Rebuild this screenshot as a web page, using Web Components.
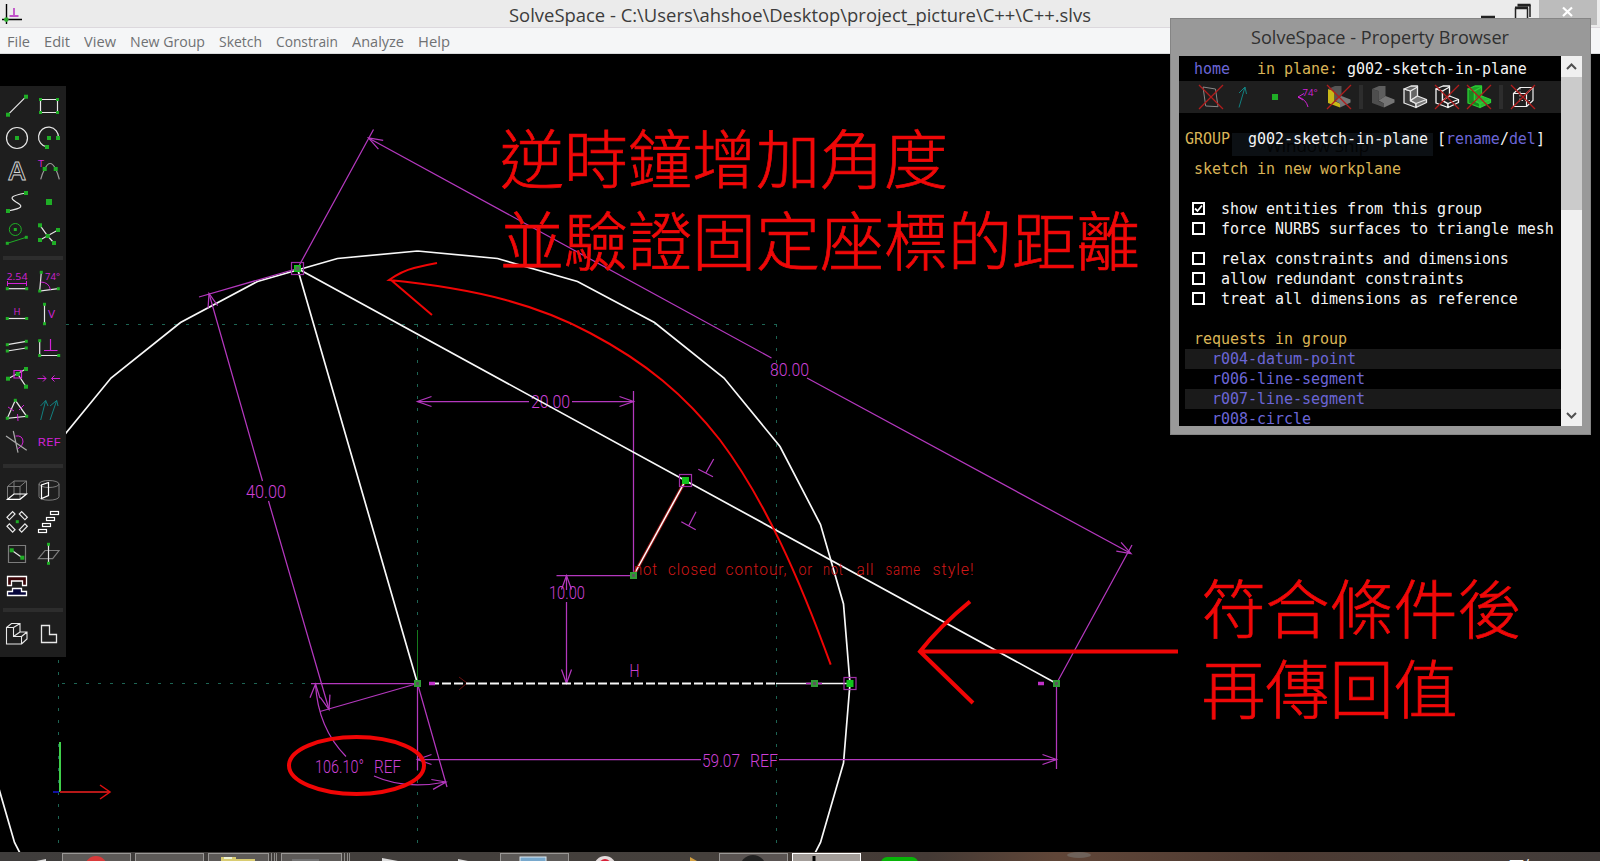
<!DOCTYPE html>
<html lang="zh-Hant">
<head>
<meta charset="utf-8">
<title>SolveSpace</title>
<style>
html,body{margin:0;height:100%;background:#000;overflow:hidden}
</style>
</head>
<body>
<solve-space></solve-space>
<script>
const def=(name,html,init)=>customElements.define(name,class extends HTMLElement{
  connectedCallback(){
    if(this.shadowRoot)return;
    const r=this.attachShadow({mode:'open'});
    const t=document.createElement('template');
    t.innerHTML=html;
    r.append(t.content.cloneNode(true));
    if(init)init.call(this,r);
  }
});

/* A run of text squeezed or stretched to a given width */
def('fit-text',`<style>:host{display:block;white-space:pre}span{display:inline-block;transform-origin:0 50%}</style><span><slot></slot></span>`,
function(r){
  const w=+this.getAttribute('w'),s=r.querySelector('span');
  this.style.width=w+'px';
  s.style.transform='scaleX('+(w/s.getBoundingClientRect().width)+')';
});

/* ---------- title bar ---------- */
def('title-bar',`<style>
:host{display:flex;height:28px;background:#ebebeb;border-bottom:1px solid #dcd8dd;box-sizing:border-box;font:18px/30px "Open Sans",sans-serif;color:#3c3c3c;justify-content:space-between}
.logo{width:509px;flex:none}
.ctl{width:125px;flex:none;margin-left:auto}
svg{display:block}
</style>
<div class="logo"><svg width="30" height="27"><path d="M6.500 4v20M2 19.500h20" stroke="#000" stroke-width="1.400"/><path d="M14 8v8M9.500 16h9" stroke="#c050c8" stroke-width="1.800"/><circle cx="6.300" cy="19.600" r="2.300" fill="#2fae2f"/></svg></div>
<fit-text w="582">SolveSpace - C:\\Users\\ahshoe\\Desktop\\project_picture\\C++\\C++.slvs</fit-text>
<div class="ctl"><svg width="125" height="27"><path d="M6 17h14" stroke="#222" stroke-width="2.500"/><path d="M40.500 20V8.500h12V20M43 5.500h12V17" fill="none" stroke="#222" stroke-width="1.500"/><path d="M40 7.800h13M42.500 5h13" stroke="#222" stroke-width="2.500"/><rect x="64" width="58" height="25" fill="#bcbcbc"/><path d="M88 7.500l9 8.500M97 7.500l-9 8.500" stroke="#fff" stroke-width="2.200"/></svg></div>`);

/* ---------- menu bar ---------- */
def('menu-bar',`<style>
:host{display:flex;gap:14px;padding-left:7px;height:26px;box-sizing:border-box;background:#f5f6f7;border-bottom:1px solid #d8dadc;font:14.500px/27px "Open Sans",sans-serif;color:#6f7173}
</style>
<fit-text w="23">File</fit-text><fit-text w="26">Edit</fit-text><fit-text w="32">View</fit-text><fit-text w="75">New Group</fit-text><fit-text w="43">Sketch</fit-text><fit-text w="62">Constrain</fit-text><fit-text w="52">Analyze</fit-text><fit-text w="32">Help</fit-text>`);

/* ---------- left tool palette ---------- */
const d=(x,y,s=4)=>`<rect x="${x-s/2}" y="${y-s/2}" width="${s}" height="${s}" fill="#1fae26"/>`;
const w=(p,c='#e8e8e8',k=1.2,f='none')=>`<path d="${p}" stroke="${c}" stroke-width="${k}" fill="${f}"/>`;
const M='#d222d6',G='#1fae26',Y='#7c7c7c',T='#128080';
const tx=(s,x,y,len,c=M,z=9.5)=>`<text x="${x}" y="${y}" textLength="${len}" lengthAdjust="spacingAndGlyphs" fill="${c}" font-size="${z}">${s}</text>`;
const bar=(x,y,a)=>`<rect x="-4" y="-1.700" width="8" height="3.400" transform="translate(${x} ${y}) rotate(${a})" fill="none" stroke="#e8e8e8" stroke-width="1.200"/>`;
const step=(x,y)=>`<rect x="${x}" y="${y}" width="8" height="3" fill="none" stroke="#fff" stroke-width="1.200"/>`;
const palette=[[
 w('M7 24.700L25 6.700')+d(7,24.7)+d(25,6.7),
 w('M7.500 9.500H24.500V22.500H7.500Z')+d(7.5,9.5,3)+d(24.5,9.5,3)+d(7.5,22.5,3)+d(24.5,22.5,3),
 '<circle cx="16" cy="16" r="10.500" fill="none" stroke="#e8e8e8" stroke-width="1.200"/>'+d(16,16),
 w('M25.500 16A10 10 0 1 0 14 25')+d(16,16)+d(25,16)+d(14,25),
 '<text x="7.500" y="26" font-size="26" font-weight="600" textLength="17" lengthAdjust="spacingAndGlyphs" fill="#1e1e1e" stroke="#d4d4d4" stroke-width=".9">A</text>',
 tx('T',5,13,6)+w('M7.700 25.300Q9 20 11.700 15Q17 4 22.700 15Q25 20 26.300 25.300','#999')+d(11.7,15)+d(22.7,15),
 w('M25 7C8 10 9 12 15 16C22 20 23 22 7 25')+d(25,7)+d(7,25),
 d(16,16,6),
 `<circle cx="14.300" cy="11.500" r="6" fill="none" stroke="${G}"/>`+w('M6.300 25.300L25.300 19.300',G,1)+d(14.3,11.5,3)+d(6.3,25.3,3)+d(25.3,19.3,3),
 w('M7 7.300L14.700 18L21 25M7 22L25 12')+d(7,7.3)+d(25,12)+d(7,22)+d(21,25)+d(14.7,18)
],[
 tx('2.54',5.5,13.5,21)+w('M6.500 15v5M25.500 15v5M6.500 17.500H25.500',M,1)+w('M6.300 22.700H25.700')+d(6.3,22.7,3)+d(25.7,22.7,3),
 w('M8.300 6.300L6.700 25L25.300 22.700')+w('M7.500 16Q16 16 17.500 24',M,1)+tx('74°',12,13.5,15)+d(8.3,6.3,3)+d(6.7,25,3)+d(25.3,22.7,3),
 tx('H',12.5,17.3,7)+w('M6.300 20.500H25.700')+d(6.3,20.5,3)+d(25.7,20.5,3),
 w('M11.500 6.300V25.700')+tx('V',15,20,7,M,11)+d(11.5,6.3,3)+d(11.5,25.7,3),
 w('M6.300 14.700L25.300 11.300M6.300 21L25.300 18')+d(6.3,14.7,3)+d(25.3,11.3,3)+d(6.3,21,3)+d(25.3,18,3),
 w('M6.700 10.700V25.500H25.700')+w('M17.500 9V20.500M11 20.500H24.500',M)+d(6.7,10.7,3)+d(6.7,25.5,3)+d(25.7,25.5,3),
 w('M7 16.700L25 7M16.700 12L25 24.700')+d(7,16.7)+d(25,7)+d(25,24.7)+d(16.7,12)+w('M13 8.500h7.500v7.500h-7.500z',M),
 w('M4.500 16.500H13M10 13.500l3 3l-3 3M27 16.500H18.500M21.500 13.500l-3 3l3 3',M,1),
 w('M14.300 6.300L6.300 24.300L25.700 22.300Z')+w('M7 13l6 4M23 11l-5 5M16.500 20l.5 7',M,1)+d(14.3,6.3,3)+d(6.3,24.3,3)+d(25.7,22.3,3),
 w('M7.700 26L12.700 6.500M7.500 12L12.700 6.500L15 12M17 26L23.700 6.500M17 12L23.700 6.500L25 12',T,1),
 w('M14.500 10Q22 9 22 16Q22 20 16.500 23',M,1)+w('M5 10L25.700 24.300M12.300 5L17 26.700','#aaa'),
 tx('REF',4.5,20,23,M,11.5)
],[
 w('M6.500 25V12.500H19V25M6.500 12.500L13 7H25.500V20M19 12.500L25.500 7M13 7V20',Y,1)+w('M6.500 25.300H19L25.500 20H13Z','#fff'),
 `<g fill="none" stroke="${Y}"><ellipse cx="16" cy="10" rx="10" ry="3.500"/><path d="M6 10V22.700M26 10V22.700M6 22.700A10 3.500 0 0 0 26 22.700"/></g>`+w('M8.500 11V24.500L15.500 21.500V8.500Z','#fff'),
 bar(10,9.7,-45)+bar(22.3,9.7,45)+bar(10,22,45)+bar(22.3,22,-45)+d(16.3,15.7,3),
 step(5.5,23.5)+step(9.5,17.5)+step(13.5,11.5)+step(17.5,5.5),
 w('M7.500 7.500h17v17h-17z',Y)+w('M10.700 12.300L21.300 19.700')+d(10.7,12.3)+d(21.3,19.7),
 w('M12 12.500H26L19.700 20.700H5.300Z',Y)+w('M15.500 6.300V25.300')+d(15.5,6.3,3)+d(15.5,25.3,3),
 w('M6.500 6.500H25.500V15.500H21.500V11H10.500V15.500H6.500Z','#fff',1.3,'#3a0508')+w('M6.500 25.500H25.500V21.500H20.500V18.500H11.500V21.500H6.500Z','#fff',1.3,'#05053a'),
 ''
],[
 w('M5.500 9.500H12.500V18.500H20.500V26H5.500ZM5.500 9.500L10.500 5.500H19V14H26V21L20.500 26M12.500 9.500L19 5.500M12.500 18.500L19 14M20.500 18.500L26 14','#e8e8e8',1.1),
 w('M8.500 7.500H16.500V16.500H23.500V24.500H8.500Z','#e8e8e8',1.3)
]];
def('tool-palette',`<style>
:host{display:block;width:66px;height:571px;box-sizing:border-box;padding:4px 1px;background:#1e1e1e}
.g{display:grid;grid-template-columns:32px 32px;grid-auto-rows:32px}
.g+.g{grid-template-rows:16px}
.g+.g::before{content:"";grid-column:1/3;height:4px;margin:6px 2px;background:#2d2d2d}
svg{display:block;width:32px;height:32px;font-family:"Open Sans",sans-serif}
</style>`+palette.map(g=>`<div class="g">${g.map(i=>`<svg viewBox="0 0 32 32">${i}</svg>`).join('')}</div>`).join(''));

/* ---------- sketch drawing ---------- */
const q=[[0,432.5],[80,425],[160,402],[237,361],[306.5,305.5],[362.5,237],[403,159],[426,79.5],[432.5,0]];
const half=[...q.map(([x,y])=>[x,-y]),...q.slice(0,-1).reverse()];
const pts=[...half,...half.slice().reverse().map(([x,y])=>[-x,y])].map(([x,y])=>(417.5+x)+','+(683.5+y)).join(' ');
const arrow=(x,y,deg)=>`<path d="M-14 -5L0 0L-14 5" transform="translate(${x} ${y}) rotate(${deg})"/>`;
const span=(s,x,len)=>`<tspan x="${x}" textLength="${len}" lengthAdjust="spacingAndGlyphs">${s}</tspan>`;
const dim=(s,x,y,len)=>`<text x="${x}" y="${y}" textLength="${len}" lengthAdjust="spacingAndGlyphs">${s}</text>`;
const pt=(x,y)=>`<rect x="${x-3.5}" y="${y-3.5}" width="7" height="7" fill="#2f9a35"/><rect x="${x-1.5}" y="${y-1.5}" width="3" height="3" fill="#5a5a5a"/>`;
const gp=(x,y)=>`<rect x="${x-6}" y="${y-6}" width="12" height="12" fill="none" stroke="#a030a8" stroke-width="1.200"/><rect x="${x-3.5}" y="${y-3.5}" width="7" height="7" fill="#12c41c"/>`;
def('sketch-canvas',`<style>
:host{display:block;width:1600px;height:798px;background:#000}
svg{display:block}
.mag{fill:none;stroke:#b438be;stroke-width:1.250}
.dims{fill:#cc40d6;font:300 18px Roboto,"Open Sans",sans-serif}
.red{fill:none;stroke:#f00505}
.err{fill:#d01818;font:300 16.500px Roboto,sans-serif;letter-spacing:1px}
.note{fill:#f00808;stroke:#f00808;stroke-width:.7;font:300 64px "Noto Sans CJK TC",sans-serif}
</style>
<svg width="1600" height="798" viewBox="0 54 1600 798">
<g stroke="#1d6453" stroke-dasharray="3 9" fill="none"><path d="M66 324.500H776.500M62 683.500H417M58.500 324V852M417.500 324V852M776.500 324V852"/></g>
<polyline points="${pts}" fill="none" stroke="#f8f8f8" stroke-width="1.700"/>
<path d="M417.500 683V630" stroke="#157a1c" fill="none"/>
<path d="M459 677l8 6l-8 7" stroke="#6a1010" fill="none"/>
<g class="mag">
<path d="M297.500 268.500L373.500 129.500M368.500 138L771.500 358M807 378L1131 553.500M1056.500 683.500L1132 545"/>
${arrow(368.5,138,28.5+180)}${arrow(1131,553.5,28.5)}
<path d="M417.500 401.500H529M572 401.500H633.500M633.500 391V572"/>
${arrow(417.5,401.5,180)}${arrow(633.5,401.5,0)}
<path d="M297.500 268.500L199 297M209 293.500L262.500 481M268.500 501L329 709.500M417.500 683.500L320 711.500"/>
${arrow(209,293.5,-106)}${arrow(329,709.5,74)}
<path d="M311 683.500H417.500M315.500 684Q318 728 346 756.500M374 776Q405 790 446 782M417.500 683.500L447 787"/>
${arrow(315.5,684,-88)}${arrow(446,782,-10)}
<path d="M417.500 683.500V770M417.500 759.500H701M779 759.500H1056.500M1056.500 683.500V769"/>
${arrow(417.5,759.5,180)}${arrow(1056.5,759.5,0)}
<path d="M556.500 575.500H633M566.500 575.500V590M566.500 602V683.500"/>
${arrow(566.5,575.5,-90)}${arrow(566.5,683.5,90)}
<path d="M698.300 469.300L713 476.700M706 472.700L713.700 459M681.300 521.700L695.700 529.700M689 525.300L696 511.700"/>
</g>
<g class="dims">
${dim('80.00',770,376,39)}${dim('20.00',531,408,39)}${dim('40.00',246,498,40)}${dim('10.00',549,599,36)}<text y="773">${span('106.10°',315,49)} ${span('REF',374,27)}</text><text y="766.500">${span('59.07',702,38)} ${span('REF',750,28)}</text>${dim('H',629.5,677,10)}
</g>
<g fill="none" stroke="#f8f8f8" stroke-width="1.700">
<path d="M417.500 683.500L297.500 268.500L1056.500 683.500"/>
<path d="M430 683.500H776" stroke-width="2" stroke-dasharray="9 3"/><path d="M776 683.500H850"/>
</g>
<path d="M685.500 480.500L633.500 575.500" stroke="#8c1010" stroke-width="3.500"/><path d="M685.500 480.500L633.500 575.500" stroke="#fff" stroke-width="1.500"/>
<text class="err" y="574.500">${span('not',634,24)} ${span('closed',668,49)} ${span('contour,',725.5,62)} ${span('or',798.5,14.5)} ${span('not',823,20.5)} ${span('all',856.5,18)} ${span('same',885.5,35.5)} ${span('style!',932.5,42)}</text>
${gp(297.5,268.5)}<rect x="295.500" y="266.500" width="4" height="4" fill="#5a6a5a"/>${gp(685.5,480.5)}${gp(850,683.5)}${pt(417.5,683.5)}${pt(633.5,575.5)}${pt(1056.5,683.5)}
<path d="M429 683.500h6M1038 683.500h6" stroke="#c030c8" stroke-width="3.500"/><path d="M806 683.500h16" stroke="#c030c8" stroke-width="1.500"/>${pt(814.5,683.5)}
<g stroke-width="2"><path d="M60 792V742" stroke="#3fd04a"/><path d="M60 792H110" stroke="#b51818"/><path d="M100 785l10 7l-10 7" stroke="#e01010" fill="none" stroke-width="1.500"/><path d="M53 792h6" stroke="#1010a0"/></g>
<g class="red">
<path stroke-width="2" d="M830.700 664.700C800 580 765 500 720 440C685 395 645 362 590 333C540 306 480 289 389 280Q402 271 414 268T437 263M391 280L432 315"/>
<path stroke-width="4" d="M1178 651.500H919M970 601.500Q940 626 920 651.500L973 703"/>
<ellipse stroke-width="4" cx="356.500" cy="765.500" rx="67.500" ry="28.500"/>
</g>
<g class="note">
<text x="500" y="183" textLength="448">逆時鐘增加角度</text>
<text x="500" y="264.500" textLength="640">並驗證固定座標的距離</text>
<text x="1201.500" y="633" textLength="320">符合條件後</text>
<text x="1201.500" y="713" textLength="256">再傳回值</text>
</g>
</svg>`);

/* ---------- property browser ---------- */
const cross=w('M4 4L28 28M28 4L4 28','#b01c1c',1.3);
const solid=(a,b,c,s='none')=>`<g stroke="${s}" stroke-width="1.300" stroke-linejoin="round"><path d="M5 8L11.500 10V20L17 22.500V26.500L5 22Z" fill="${a}"/><path d="M5 8L12 5H18.500V15L11.500 19.500V10Z" fill="${b}"/><path d="M11.500 19.500L18.500 15L27.500 18.500V21.500L17 26.500V22.500Z" fill="${c}"/><path d="M17 22.500L27.500 18.500M11.500 10L18.500 6" fill="none"/></g>`;
const strip=[
 w('M8 6L20.500 8L23 25.700L10.700 25Z','#888',1)+cross,
 w('M12 26.500L18 6M12 12L18 6L19.500 13',T,1),
 d(16,16,6),
 w('M7 16Q15 18 17 26M7 16l6-3.500M7 16l5 3',M,1)+tx('74°',11.5,14.5,15),
 solid('#c9b818','#555','#777')+cross,
 0,
 solid('#4e4e4e','#5e5e5e','#757575'),
 solid('#3c3c3c','#666','#777','#e8e8e8'),
 solid('#1e1e1e','#1e1e1e','#1e1e1e','#f4f4f4')+cross,
 solid('#178a20','#1fa028','#2ab432','#2bd034')+cross,
 0,
 w('M6.500 12.500H19.500V25.500H6.500ZM6.500 12.500L13 6.500H26V19.500L19.500 25.500M19.500 12.500L26 6.500','#f0f0f0')+w('M13 7V19.500H26M13 19.500L6.500 25','#ddd',1).replace('/>',' stroke-dasharray="1.500 2"/>')+cross
];
def('check-line',`<style>
:host{display:flex;height:20px;line-height:20px;white-space:pre;padding-left:6px}
i{width:9px;height:9px;border:2px solid #fff;margin:3px 16px 0 7px;flex:none}
svg{display:none;width:9px;height:9px}
:host([on]) svg{display:block}
</style><i><svg viewBox="0 0 9 9"><path d="M1 4.500L3.500 7L8 1.500" fill="none" stroke="#fff" stroke-width="1.800"/></svg></i><slot></slot>`);
def('property-browser',`<style>
:host{display:flex;flex-direction:column;box-sizing:border-box;width:421px;height:417px;background:#999;border:1px solid #858585;padding:0 8px 8px}
.t{display:flex;justify-content:center;height:37px;font:18px/36px "Open Sans",sans-serif;color:#303030}
.t fit-text{margin-right:2px}
.in{display:flex;height:370px;background:#000}
.doc{position:relative;width:382px;overflow:hidden;font:15px/20px "DejaVu Sans Mono",monospace;letter-spacing:-.035px;color:#f4f4f4}
.r{position:relative;height:20px;padding-left:6px;white-space:pre}
.h{padding-top:3px;height:22px}
.r.a{background:linear-gradient(#1a1a1a,#1a1a1a) 6px 0 no-repeat}
.s10{height:10px}.s20{height:20px}
.strip{display:flex;height:32px;background:#1e1e1e;padding-left:16px;margin-bottom:16px}
.strip svg{width:32px;height:32px;font-family:"Open Sans",sans-serif}
.strip b{width:4px;height:24px;margin:4px;background:#2d2d2d}
.y{color:#d9b457}.b{color:#6b66d6}
.ghost{position:absolute;left:53px;top:77px;width:201px;height:23px;background:#0c1014;color:#030405;font:17px/25px "Open Sans",sans-serif;letter-spacing:0;text-indent:34px}
.sb{display:flex;flex-direction:column;width:21px;background:#f0f0f0}
.sb svg{display:block}.th{height:133px;background:#cbcbcb;margin-bottom:auto}
</style>
<div class="t"><fit-text w="258">SolveSpace - Property Browser</fit-text></div>
<div class="in"><div class="doc"><div class="ghost">Window Snip</div>
<div class="r h"> <span class="b">home</span>   <span class="y">in plane:</span> g002-sketch-in-plane</div>
<div class="strip">${strip.map(s=>s?`<svg viewBox="0 0 32 32">${s}</svg>`:'<b></b>').join('')}</div>
<div class="r"><span class="y">GROUP</span>  g002-sketch-in-plane [<span class="b">rename</span>/<span class="b">del</span>]</div>
<div class="s10"></div>
<div class="r y"> sketch in new workplane</div>
<div class="s20"></div>
<check-line on>show entities from this group</check-line>
<check-line>force NURBS surfaces to triangle mesh</check-line>
<div class="s10"></div>
<check-line>relax constraints and dimensions</check-line>
<check-line>allow redundant constraints</check-line>
<check-line>treat all dimensions as reference</check-line>
<div class="s20"></div>
<div class="r y"> requests in group</div>
<div class="r a b">   r004-datum-point</div>
<div class="r b">   r006-line-segment</div>
<div class="r a b">   r007-line-segment</div>
<div class="r b">   r008-circle</div>
</div>
<div class="sb"><svg width="21" height="21"><path d="M6 13l4.500-4.500L15 13" fill="none" stroke="#505050" stroke-width="2"/></svg><div class="th"></div><svg width="21" height="21"><path d="M6 8l4.500 4.500L15 8" fill="none" stroke="#505050" stroke-width="2"/></svg></div></div>`);

/* ---------- taskbar sliver ---------- */
const tb=(x,wd,f='#5d5a58',s='#9a9896')=>`<rect x="${x+.5}" y="1.500" width="${wd}" height="12" fill="${f}" stroke="${s}"/>`;
def('task-bar',`<style>:host{display:block;width:1600px;height:9px;overflow:hidden}svg{display:block}</style>
<svg width="1600" height="9"><defs><linearGradient id="g"><stop offset="0" stop-color="#3f3d3c"/><stop offset=".44" stop-color="#45403c"/><stop offset=".58" stop-color="#443a35"/><stop offset=".66" stop-color="#604638"/><stop offset=".8" stop-color="#4d3a32"/><stop offset=".88" stop-color="#493d37"/><stop offset="1" stop-color="#423c3a"/></linearGradient></defs>
<rect width="1600" height="9" fill="url(#g)"/>
<path d="M36 9l10-2v2zM382 6l16 3h-16zM458 7l10 2h-10z" fill="#ddd"/>
${tb(62,68)}${tb(135,68)}${tb(208,60)}${tb(281,60)}${tb(500,68)}${tb(719,68,'#5a5452')}${tb(792,68,'#a39d99','#fff')}
<path d="M271.500 1v8M274.500 1v8M276.500 1v8M344.500 1v8M347.500 1v8M349.500 1v8" stroke="#8d8b89"/>
<circle cx="96" cy="15" r="11" fill="#d93a3a"/><path d="M221 5h15v2h19v2h-34z" fill="#d9cc72"/><path d="M224 5h8v2h-8z" fill="#eef3d8"/><path d="M292 8h27" stroke="#8b8d90"/>
<rect x="520" y="5" width="26" height="6" fill="#78a8cc" stroke="#dde8ef"/><circle cx="605" cy="15" r="11" fill="#e4dcdc"/><circle cx="605" cy="13" r="6" fill="#d82038"/>
<path d="M690 5l7 4h-7z" fill="#d3a040"/><circle cx="753" cy="16" r="13" fill="#222"/><path d="M814 4v5" stroke="#000" stroke-width="3"/><rect x="881" y="5" width="37" height="12" rx="6" fill="#08b408"/>
<ellipse cx="1079" cy="3" rx="12" ry="3" fill="#6e625a"/>
<text x="1509" y="20" fill="#fff" font-size="15" font-family="Noto Sans CJK TC,sans-serif">下午</text></svg>`);

def('solve-space',`<style>
:host{display:flex;flex-direction:column;position:relative;width:1600px;height:861px;overflow:hidden}
tool-palette{position:absolute;left:0;top:86px}
property-browser{position:absolute;left:1170px;top:18px}
</style><title-bar></title-bar><menu-bar></menu-bar><sketch-canvas></sketch-canvas><task-bar></task-bar><tool-palette></tool-palette><property-browser></property-browser>`);
</script>
</body>
</html>
